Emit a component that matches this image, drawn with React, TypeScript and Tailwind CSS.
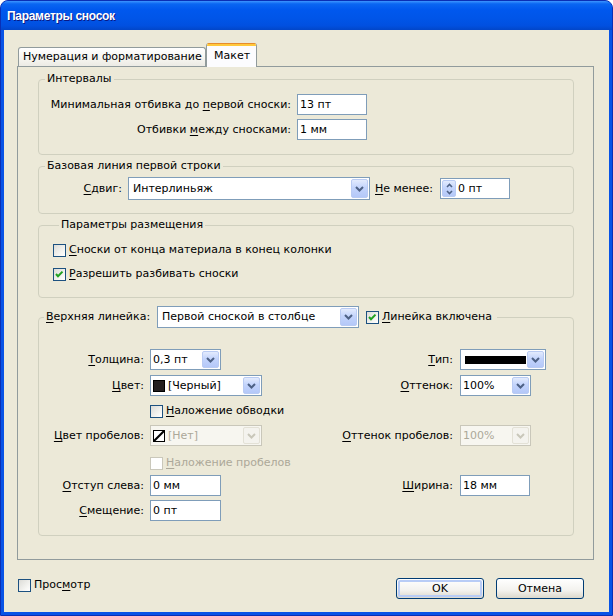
import React from "react";

const U = ({ children }: { children: React.ReactNode }) => (
  <span className="underline decoration-1 underline-offset-[2px]">{children}</span>
);

function Chevron({ disabled }: { disabled?: boolean }) {
  return (
    <svg width="9" height="6" viewBox="0 0 9 6">
      <path d="M1 1 L4.5 4.5 L8 1" stroke={disabled ? "#C9C7BA" : "#4D6185"} strokeWidth="2" fill="none" />
    </svg>
  );
}

function DropBtn({ disabled }: { disabled?: boolean }) {
  return (
    <div
      className={
        disabled
          ? "w-[17px] self-stretch my-[1px] mr-[1px] rounded-[2px] border border-[#E3E1D6] bg-[#F4F3EE] flex items-center justify-center"
          : "w-[17px] self-stretch my-[1px] mr-[1px] rounded-[2px] border border-[#B9CBF3] bg-[linear-gradient(to_bottom,#E3EBFD,#C3D4FC_45%,#B4C8F8)] flex items-center justify-center"
      }
    >
      <Chevron disabled={disabled} />
    </div>
  );
}

function Combo({
  children,
  className,
  disabled,
}: {
  children: React.ReactNode;
  className: string;
  disabled?: boolean;
}) {
  return (
    <div
      className={
        (disabled
          ? "border-[#C9C7BA] bg-[#F7F6F0] text-[#ACA899] "
          : "border-[#7F9DB9] bg-white text-black ") +
        "border flex items-stretch " +
        className
      }
    >
      <div className="flex-1 flex items-center pl-[2px] min-w-0 whitespace-nowrap overflow-hidden">{children}</div>
      <DropBtn disabled={disabled} />
    </div>
  );
}

function TextBox({ value, className }: { value: string; className: string }) {
  return (
    <div className={"h-[21px] border border-[#7F9DB9] bg-white flex items-center pl-[2px] " + className}>
      {value}
    </div>
  );
}

function Check({ checked, disabled }: { checked?: boolean; disabled?: boolean }) {
  return (
    <div
      className={
        (disabled
          ? "border-[#CAC8BB] bg-white "
          : "border-[#1C5180] bg-[linear-gradient(135deg,#DCDCD7,#F6F6F3_70%,#FFFFFF)] ") +
        "w-[13px] h-[13px] border flex items-center justify-center shrink-0"
      }
    >
      {checked && (
        <svg width="11" height="11" viewBox="0 0 11 11">
          <path d="M2 5 L4 7.2 L8.5 2.6" stroke="#21A121" strokeWidth="2" fill="none" />
        </svg>
      )}
    </div>
  );
}

function CheckRow({
  checked,
  disabled,
  children,
}: {
  checked?: boolean;
  disabled?: boolean;
  children: React.ReactNode;
}) {
  return (
    <div className={"flex items-center gap-[3px] h-[18px] " + (disabled ? "text-[#ACA899]" : "text-black")}>
      <Check checked={checked} disabled={disabled} />
      <span>{children}</span>
    </div>
  );
}

function Group({ legend, children, className }: { legend: React.ReactNode; children: React.ReactNode; className: string }) {
  return (
    <fieldset className={"border border-[#D0D0BF] rounded-[4px] " + className}>
      <legend className="ml-[6px] px-[2px] leading-[14px]">{legend}</legend>
      {children}
    </fieldset>
  );
}

function Button({ children, def }: { children: React.ReactNode; def?: boolean }) {
  return (
    <div className="w-[88px] h-[21px] rounded-[3px] border border-[#003C74] bg-[linear-gradient(to_bottom,#FFFFFF,#F3F2EE_60%,#DCD8CC)] p-[1px]">
      <div
        className={
          (def ? "border-2 border-[#B8CCF6] " : "border-2 border-transparent ") +
          "w-full h-full rounded-[2px] flex items-center justify-center"
        }
      >
        {children}
      </div>
    </div>
  );
}

export default function App() {
  return (
    <div className="w-[613px] h-[616px] bg-white font-['DejaVu_Sans',sans-serif] text-[11px] leading-[14px] text-black">
      <div className="w-full h-full rounded-t-[8px] bg-[#0853E6] border border-[#0A2FB5] flex flex-col overflow-hidden">
        {/* title bar */}
        <div className="h-[29px] shrink-0 bg-[linear-gradient(to_bottom,#3D95FF_0%,#0A66F2_10%,#0058EE_30%,#0055E8_60%,#0150E0_85%,#0246C8_100%)] flex items-center pl-[6px]">
          <span className="text-white font-bold text-[12px] tracking-[-0.3px] font-['Liberation_Sans',sans-serif] [text-shadow:1px_1px_0_#0A1883]">
            Параметры сносок
          </span>
        </div>
        {/* client */}
        <div className="flex-1 mx-[3px] mb-[3px] bg-[#ECE9D8] flex flex-col">
          {/* tabs */}
          <div className="flex items-end h-[23px] mt-[13px] ml-[14px] relative z-10">
            <div className="w-[188px] h-[19px] border border-b-0 border-[#919B9C] rounded-t-[3px] bg-[linear-gradient(to_bottom,#FFFFFF,#F3F2EC_70%,#ECEBE5)] flex items-center pl-[4px]">
              Нумерация и форматирование
            </div>
            <div className="w-[51px] h-[24px] -mb-[1px] border-x border-[#919B9C] bg-[#FCFCFE] flex flex-col rounded-t-[3px] overflow-hidden">
              <div className="h-[3px] bg-[#FFC83C] border-t border-[#E68B2C]" />
              <div className="flex-1 flex items-center pl-[7px] pb-[2px]">Макет</div>
            </div>
          </div>
          {/* panel */}
          <div className="ml-[13px] mr-[15px] h-[494px] border border-[#919B9C] bg-[#ECE9D8] pt-[5px] pl-[20px] pr-[19px]">
            <Group legend="Интервалы" className="pt-[8px] pb-[14px]">
              <div className="flex items-center h-[21px]">
                <div className="w-[252px] text-right">
                  Минимальная отбивка до <U>п</U>ервой сноски:
                </div>
                <TextBox value="13 пт" className="ml-[6px] w-[70px]" />
              </div>
              <div className="flex items-center h-[21px] mt-[4px]">
                <div className="w-[252px] text-right">
                  Отбивки <U>м</U>ежду сносками:
                </div>
                <TextBox value="1 мм" className="ml-[6px] w-[70px]" />
              </div>
            </Group>

            <Group legend="Базовая линия первой строки" className="mt-[4px] pt-[4px] pb-[13px]">
              <div className="flex items-center h-[23px]">
                <div className="w-[83px] text-right">
                  <U>С</U>двиг:
                </div>
                <Combo className="ml-[6px] w-[242px] h-[23px]">
                  <span className="pl-[2px]">Интерлиньяж</span>
                </Combo>
                <div className="ml-[5px] w-[65px]">
                  <U>Н</U>е менее:
                </div>
                <div className="w-[70px] h-[21px] border border-[#7F9DB9] bg-white flex items-stretch">
                  <div className="w-[14px] my-[1px] ml-[1px] rounded-[2px] border border-[#B9CBF3] bg-[linear-gradient(to_bottom,#E3EBFD,#C3D4FC_45%,#B4C8F8)] flex flex-col items-center justify-center gap-[2px]">
                    <svg width="7" height="5" viewBox="0 0 7 5">
                      <path d="M1 4 L3.5 1.5 L6 4" stroke="#4D6185" strokeWidth="1.6" fill="none" />
                    </svg>
                    <svg width="7" height="5" viewBox="0 0 7 5">
                      <path d="M1 1 L3.5 3.5 L6 1" stroke="#4D6185" strokeWidth="1.6" fill="none" />
                    </svg>
                  </div>
                  <div className="flex items-center pl-[2px]">0 пт</div>
                </div>
              </div>
            </Group>

            <Group legend="Параметры размещения" className="mt-[4px] pt-[9px] pb-[14px] pl-[14px]">
              <CheckRow>
                <U>С</U>носки от конца материала в конец колонки
              </CheckRow>
              <div className="mt-[6px]">
                <CheckRow checked>
                  <U>Р</U>азрешить разбивать сноски
                </CheckRow>
              </div>
            </Group>

            <fieldset className="mt-[8px] border border-[#D0D0BF] rounded-[4px] pt-[21px] pb-[14px]">
              <legend className="ml-[5px] pl-[2px] pr-[5px]">
                <div className="flex items-center h-[22px]">
                  <div className="w-[105px]">
                    <U>В</U>ерхняя линейка:
                  </div>
                  <Combo className="ml-[6px] w-[202px] h-[22px]">
                    <span className="pl-[2px]">Первой сноской в столбце</span>
                  </Combo>
                  <div className="ml-[7px]">
                    <CheckRow checked>
                      <U>Л</U>инейка включена
                    </CheckRow>
                  </div>
                </div>
              </legend>

              {/* row 1 */}
              <div className="flex items-center h-[21px]">
                <div className="w-[111px] text-right pr-[6px]">
                  <U>Т</U>олщина:
                </div>
                <div className="w-[112px]">
                  <Combo className="w-[71px] h-[21px]">0,3 пт</Combo>
                </div>
                <div className="w-[198px] text-right pr-[7px]">
                  <U>Т</U>ип:
                </div>
                <Combo className="w-[86px] h-[21px]">
                  <div className="ml-[2px] w-[61px] h-[8px] bg-black" />
                </Combo>
              </div>
              {/* row 2 */}
              <div className="flex items-center h-[21px] mt-[5px]">
                <div className="w-[111px] text-right pr-[6px]">
                  <U>Ц</U>вет:
                </div>
                <div className="w-[112px]">
                  <Combo className="w-[112px] h-[21px]">
                    <div className="w-[12px] h-[12px] bg-[#231F20] border border-black mr-[3px] shrink-0" />
                    [Черный]
                  </Combo>
                </div>
                <div className="w-[198px] text-right pr-[7px]">
                  <U>О</U>ттенок:
                </div>
                <Combo className="w-[71px] h-[21px]">100%</Combo>
              </div>
              {/* row 3 */}
              <div className="flex items-center mt-[6px]">
                <div className="w-[111px]" />
                <CheckRow>
                  <U>Н</U>аложение обводки
                </CheckRow>
              </div>
              {/* row 4 */}
              <div className="flex items-center h-[21px] mt-[5px]">
                <div className="w-[111px] text-right pr-[6px]">
                  <U>Ц</U>вет пробелов:
                </div>
                <div className="w-[112px]">
                  <Combo className="w-[112px] h-[21px]" disabled>
                    <svg width="12" height="12" viewBox="0 0 12 12" className="mr-[3px] shrink-0">
                      <rect x="0.5" y="0.5" width="11" height="11" fill="white" stroke="black" />
                      <path d="M1 11 L11 1" stroke="black" strokeWidth="2.2" />
                    </svg>
                    [Нет]
                  </Combo>
                </div>
                <div className="w-[198px] text-right pr-[7px]">
                  <U>О</U>ттенок пробелов:
                </div>
                <Combo className="w-[71px] h-[21px]" disabled>
                  100%
                </Combo>
              </div>
              {/* row 5 */}
              <div className="flex items-center mt-[8px]">
                <div className="w-[111px]" />
                <CheckRow disabled>
                  <U>Н</U>аложение пробелов
                </CheckRow>
              </div>
              {/* row 6 */}
              <div className="flex items-center h-[21px] mt-[3px]">
                <div className="w-[111px] text-right pr-[6px]">
                  <U>О</U>тступ слева:
                </div>
                <div className="w-[112px]">
                  <TextBox value="0 мм" className="w-[71px]" />
                </div>
                <div className="w-[198px] text-right pr-[7px]">
                  <U>Ш</U>ирина:
                </div>
                <TextBox value="18 мм" className="w-[70px]" />
              </div>
              {/* row 7 */}
              <div className="flex items-center h-[21px] mt-[4px]">
                <div className="w-[111px] text-right pr-[6px]">
                  <U>С</U>мещение:
                </div>
                <TextBox value="0 пт" className="w-[71px]" />
              </div>
            </fieldset>
          </div>
          {/* bottom */}
          <div className="flex items-start mt-[18px] pl-[14px] pr-[25px]">
            <div className="flex items-center gap-[3px] h-[14px] mt-[0px]">
              <Check />
              <span>
                Прос<U>м</U>отр
              </span>
            </div>
            <div className="ml-auto flex gap-[12px]">
              <Button def>OK</Button>
              <Button>Отмена</Button>
            </div>
          </div>
        </div>
      </div>
    </div>
  );
}
